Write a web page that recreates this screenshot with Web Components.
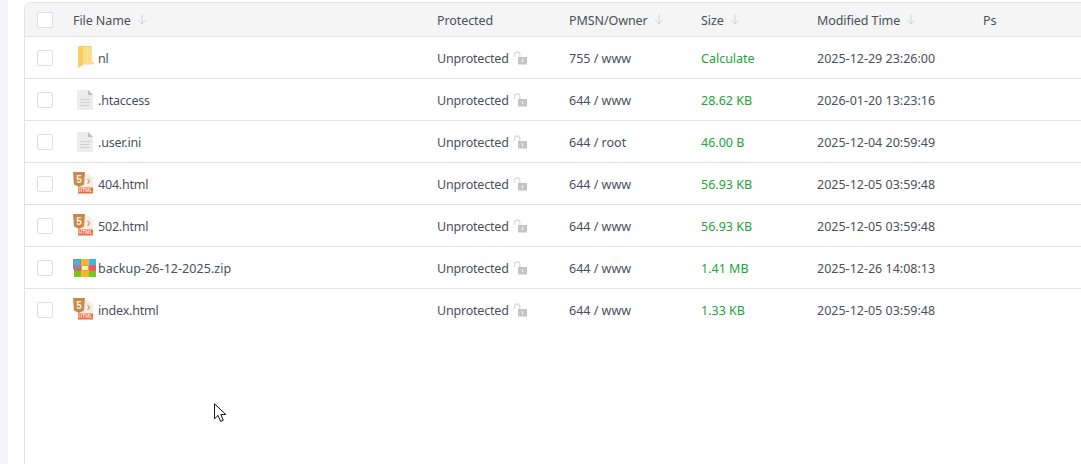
<!DOCTYPE html>
<html>
<head>
<meta charset="utf-8">
<title>Files</title>
<style>
  html, body { margin: 0; height: 100%; overflow: hidden; background: #fff; }
  body { font-family: "Noto Sans", "Noto Sans CJK SC", "Liberation Sans", sans-serif; }
</style>
</head>
<body>
<file-page></file-page>

<template id="icon-folder">
  <svg width="18" height="24" viewBox="0 0 18 24" style="margin-top:-2px">
    <path d="M5 1h9.500v16.500H17v1c0 .5-.3 .8-.8 .8H5z" fill="#eebf4c"/>
    <path d="M5 1.500h9v16.500h2.700v1.300H6.500L1.500 23V2.500z" fill="#f9dd8a"/>
    <path d="M1 1.500 6 .5V19.500L1 23z" fill="#f5cf66"/>
  </svg>
</template>
<template id="icon-text">
  <svg width="16" height="20" viewBox="0 0 16 20">
    <path d="M0 0h11l5 5v15H0z" fill="#ececec"/>
    <path d="M11 0l5 5h-5z" fill="#bdbdbd"/>
    <path d="M3 9.500h10M3 12.500h10M3 15.500h10" stroke="#d2d2d2" stroke-width="1"/>
  </svg>
</template>
<template id="icon-html">
  <svg width="20" height="22" viewBox="0 0 20 22" style="margin-top:-1px">
    <path d="M5 2h11l4 4v13H5z" fill="#f3efe6"/>
    <path d="M0 0h12l-1 12.500-5 2.500-5-2.500z" fill="#c98a49"/>
    <text x="6" y="10.500" text-anchor="middle" font-size="10" font-weight="700" font-family="Liberation Sans" fill="#fbeee0">5</text>
    <path d="M14.500 7l2 2.500-2 2.500" fill="none" stroke="#e88a5e" stroke-width="1.200"/>
    <rect x="5" y="15.500" width="15" height="6" fill="#ef6a3e"/>
    <text x="12.500" y="20.300" text-anchor="middle" font-size="5" font-weight="700" font-family="Liberation Sans" fill="#fde3d8">HTML</text>
  </svg>
</template>
<template id="icon-zip">
  <svg width="23" height="18" viewBox="0 0 23 18">
    <rect x="1" y="0" width="22" height="6" fill="#2bbcf0"/>
    <rect x="1" y="6" width="22" height="6" fill="#f2575d"/>
    <rect x="1" y="12" width="22" height="6" fill="#75c91a"/>
    <rect x="8" y="0" width="8" height="18" fill="#f8b62c"/>
    <rect x="8.500" y="6.500" width="7" height="5" rx="1" fill="#fff2c4" stroke="#e8a020"/>
    <path d="M.5 .5h6c.5 0 1 .4 1 1v8.500h-7z" fill="#5aa9d6" fill-opacity=".55" stroke="#7d8a96"/>
  </svg>
</template>

<script>
  // row data for the file table
  const files = [
    { name: 'nl', icon: 'folder', perm: '755 / www', size: 'Calculate', time: '2025-12-29 23:26:00' },
    { name: '.htaccess', icon: 'text', perm: '644 / www', size: '28.62 KB', time: '2026-01-20 13:23:16' },
    { name: '.user.ini', icon: 'text', perm: '644 / root', size: '46.00 B', time: '2025-12-04 20:59:49' },
    { name: '404.html', icon: 'html', perm: '644 / www', size: '56.93 KB', time: '2025-12-05 03:59:48' },
    { name: '502.html', icon: 'html', perm: '644 / www', size: '56.93 KB', time: '2025-12-05 03:59:48' },
    { name: 'backup-26-12-2025.zip', icon: 'zip', perm: '644 / www', size: '1.41 MB', time: '2025-12-26 14:08:13' },
    { name: 'index.html', icon: 'html', perm: '644 / www', size: '1.33 KB', time: '2025-12-05 03:59:48' }
  ];

  const gridCols = '48px 364px 132px 132px 116px 166px 1fr';

  class SortHead extends HTMLElement {
    constructor() {
      super();
      const shadow = this.attachShadow({ mode: 'open' });
      const arrow = this.hasAttribute('sortable')
        ? `<svg width="10" height="11" viewBox="0 0 10 11"><path d="M5 .5v9.500M1 6l4 4 4-4" fill="none" stroke="#d0d2d6" stroke-width="1"/></svg>`
        : '';
      shadow.innerHTML = `
      <style>
        :host { display: flex; align-items: center; gap: 6px; letter-spacing: -0.08px; }
        .label { padding-top: 2px; }
      </style>
      <span class="label"><slot></slot></span>${arrow}`;
    }
  }
  customElements.define('sort-head', SortHead);

  class CheckBox extends HTMLElement {
    constructor() {
      super();
      const shadow = this.attachShadow({ mode: 'open' });
      shadow.innerHTML = `
      <style>
        :host { display: block; width: 14px; height: 14px; border: 1px solid #dcdfe6; border-radius: 2px; background: #fff; }
      </style>`;
    }
  }
  customElements.define('check-box', CheckBox);

  class FileRow extends HTMLElement {
    constructor() {
      super();
      this.attachShadow({ mode: 'open' });
    }

    // attributes are only there once the row is attached
    connectedCallback() {
      const icon = this.getAttribute('icon');
      this.shadowRoot.innerHTML = `
      <style>
        :host { display: grid; grid-template-columns: ${gridCols}; align-items: center; height: 41px; border-bottom: 1px solid #e0e2ea; color: #4a505c; font-size: 12.5px; }
        :host(:last-child) { border-bottom: 0; }
        .check { padding-left: 12px; }
        .name { display: flex; align-items: center; }
        .name span:last-child { padding-top: 2px; letter-spacing: -0.2px; }
        .name span.zip-name:last-child { letter-spacing: 0.05px; }
        .pic { width: 25px; height: 24px; display: flex; align-items: center; }
        .pic.folder { padding-left: 4px; width: 21px; }
        .pic.text { padding-left: 4px; width: 21px; }
        .lock { display: flex; align-items: center; gap: 4px; }
        .lock span { letter-spacing: -0.2px; padding-top: 2px; }
        .val { padding-top: 2px; }
        .size { color: #20a53a; }
      </style>
      <div class="check"><check-box></check-box></div>
      <div class="name"><span class="pic ${icon}"></span><span class="${icon === 'zip' ? 'zip-name' : ''}">${this.getAttribute('name')}</span></div>
      <div class="lock"><span>Unprotected</span>
        <svg width="14" height="14" viewBox="0 0 14 14"><path d="M1.500 6V3.700a2.700 2.700 0 0 1 5.400 0V6" fill="none" stroke="#dcdcdc" stroke-width="1.300"/><rect x="5" y="6" width="9" height="7.500" fill="#c4c4c4"/><rect x="8.800" y="8.300" width="1.400" height="3" fill="#eee"/></svg>
      </div>
      <div class="val">${this.getAttribute('perm')}</div>
      <div class="val size">${this.getAttribute('size')}</div>
      <div class="val">${this.getAttribute('time')}</div>
      <div></div>`;
      const tpl = document.getElementById('icon-' + icon);
      this.shadowRoot.querySelector('.pic').appendChild(tpl.content.cloneNode(true));
    }
  }
  customElements.define('file-row', FileRow);

  class FileTable extends HTMLElement {
    constructor() {
      super();
      const shadow = this.attachShadow({ mode: 'open' });
      shadow.innerHTML = `
      <style>
        :host { display: block; flex: 1; border: 1px solid #e0e2ea; border-right: 0; border-bottom: 0; border-top-left-radius: 8px; overflow: hidden; }
        .head { display: grid; grid-template-columns: ${gridCols}; align-items: center; height: 33px; background: #f5f5f5; border-bottom: 1px solid #e0e2ea; color: #4a505c; font-size: 12.5px; }
        .check { padding-left: 12px; }
      </style>
      <div class="head">
        <div class="check"><check-box></check-box></div>
        <sort-head sortable>File Name</sort-head>
        <sort-head>Protected</sort-head>
        <sort-head sortable>PMSN/Owner</sort-head>
        <sort-head sortable>Size</sort-head>
        <sort-head sortable>Modified Time</sort-head>
        <sort-head>Ps</sort-head>
      </div>
      <div class="body"></div>`;
      const body = shadow.querySelector('.body');
      files.forEach((f) => {
        const row = document.createElement('file-row');
        row.setAttribute('name', f.name);
        row.setAttribute('icon', f.icon);
        row.setAttribute('perm', f.perm);
        row.setAttribute('size', f.size);
        row.setAttribute('time', f.time);
        body.appendChild(row);
      });
    }
  }
  customElements.define('file-table', FileTable);

  class FilePage extends HTMLElement {
    constructor() {
      super();
      const shadow = this.attachShadow({ mode: 'open' });
      shadow.innerHTML = `
      <style>
        :host { display: flex; height: 464px; width: 1081px; background: #fff; position: relative; }
        .side { width: 8px; background: #f3f5f9; }
        .panel { flex: 1; display: flex; padding: 2px 0 0 16px; background: #fff; }
        .cursor { position: absolute; left: 214px; top: 403px; }
      </style>
      <div class="side"></div>
      <div class="panel"><file-table></file-table></div>
      <svg class="cursor" width="13" height="20" viewBox="0 0 13 20"><path d="M.5 .8v15l3.600-3.400 2.500 6 2.700-1.200-2.500-5.700h5z" fill="#fff" stroke="#111" stroke-width="1"/></svg>`;
    }
  }
  customElements.define('file-page', FilePage);
</script>
</body>
</html>
